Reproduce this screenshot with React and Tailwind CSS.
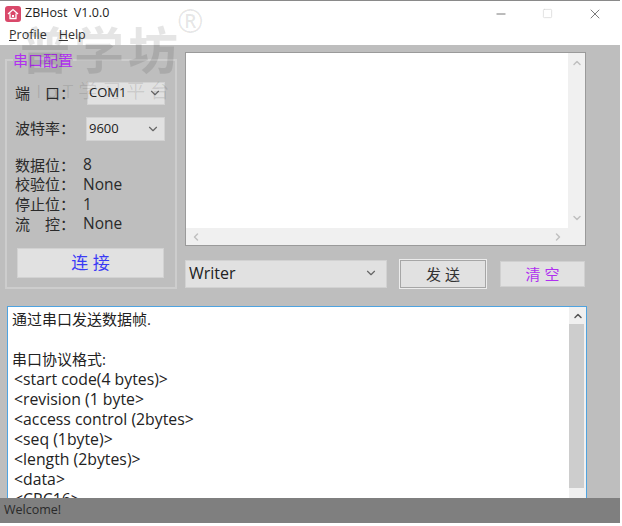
import React from "react";
import { ChevronDown, ChevronUp, ChevronLeft, ChevronRight, Minus, Square, X } from "lucide-react";

const FONT = "font-['Open_Sans','Noto_Sans_CJK_SC',sans-serif]";

const Combo = ({ label, className }) => (
  <div className={`flex items-center justify-between bg-[#e1e1e1] border border-[#d2d2d2] text-[#222] ${className}`}>
    <span>{label}</span>
    <ChevronDown className="w-3.5 h-3.5 text-[#666]" />
  </div>
);

const InfoRow = ({ label, value }) => (
  <div className="flex h-[19.7px] items-center text-[15px] text-[#2a2a2a]">
    <span className="w-[68px] whitespace-pre">{label}</span>
    <span className="text-[15.5px]">{value}</span>
  </div>
);

const PROTOCOL = [
  { text: "通过串口发送数据帧.", cjk: true },
  { text: "" },
  { text: "串口协议格式:", cjk: true },
  { text: "<start code(4 bytes)>" },
  { text: "<revision (1 byte>" },
  { text: "<access control (2bytes>" },
  { text: "<seq (1byte)>" },
  { text: "<length (2bytes)>" },
  { text: "<data>" },
  { text: "<CRC16>" },
];

export default function App() {
  return (
    <div className={`relative w-[622px] h-[526px] overflow-hidden bg-white ${FONT}`}>
      <div className="flex flex-col w-[620px] h-[523px] border-t border-[#8a8a8a] bg-[#bebebe]">
        {/* Title bar */}
        <div className="flex items-center h-[25px] shrink-0 bg-white pl-[5px]">
          <svg width="16" height="16" viewBox="0 0 16 16" className="shrink-0">
            <rect width="16" height="16" rx="3" fill="#d9486a" />
            <path d="M3 8l5-4.5L13 8M5 7.5V12.5H11V7.5" fill="none" stroke="#fff" strokeWidth="1.3" />
            <rect x="7" y="9" width="2" height="2" fill="#fff" />
          </svg>
          <span className="ml-1 text-[12.5px] text-[#222] whitespace-pre">ZBHost  V1.0.0</span>
          <div className="ml-auto flex items-center text-[#666]">
            <Minus className="w-[14px] h-[14px] mr-[34px]" strokeWidth={1.5} />
            <Square className="w-[11px] h-[11px] mr-[34px] text-[#d5d5d5]" strokeWidth={1.5} />
            <X className="w-[16px] h-[16px] mr-[17px]" strokeWidth={1.3} />
          </div>
        </div>

        {/* Menu */}
        <div className="flex items-center gap-[12px] h-[19px] shrink-0 bg-white pl-[9px] text-[12.5px] text-[#333]">
          <span><span className="underline">P</span>rofile</span>
          <span><span className="underline">H</span>elp</span>
        </div>

        {/* Body */}
        <div className="flex flex-1 min-h-0 flex-col">
          <div className="flex items-start">
            <fieldset className="w-[172px] h-[238px] ml-[5px] mt-[6px] border-2 border-[#cdcdcd] px-[8px]">
              <legend className="-ml-0.5 text-[15px] leading-[18px] text-[#b030f0]">串口配置</legend>
              <div className="flex items-center h-6 mt-[12px] text-[15px] text-[#2a2a2a]">
                <span className="w-[72px] whitespace-pre">端　口：</span>
                <Combo label="COM1" className="w-[78px] h-[23px] pl-[1px] pr-0.5 text-[13px]" />
              </div>
              <div className="flex items-center h-6 mt-[12px] text-[15px] text-[#2a2a2a]">
                <span className="w-[71px] pb-0.5">波特率：</span>
                <Combo label="9600" className="w-[79px] h-6 pl-[2px] pr-1 text-[13px]" />
              </div>
              <div className="mt-[14px]">
                <InfoRow label="数据位：" value="8" />
                <InfoRow label="校验位：" value="None" />
                <InfoRow label="停止位：" value="1" />
                <InfoRow label="流　控：" value="None" />
              </div>
              <div className="flex items-center justify-center w-[147px] h-[30px] mt-[14px] ml-0.5 bg-[#e1e1e1] border border-[#d2d2d2] text-[17px] text-[#3a3af5] whitespace-pre">
                连 接
              </div>
            </fieldset>

            <div className="ml-[8px] mt-[7px] w-[401px]">
              {/* Log box */}
              <div className="flex flex-col h-[194px] bg-white border border-[#9a9a9a]">
                <div className="flex flex-1 min-h-0">
                  <div className="flex-1" />
                  <div className="flex flex-col justify-between items-center w-[17px] py-1 bg-[#f0f0f0] text-[#c0c0c0]">
                    <ChevronUp className="w-3 h-3" strokeWidth={3} />
                    <ChevronDown className="w-3 h-3" strokeWidth={3} />
                  </div>
                </div>
                <div className="flex items-center justify-between h-[17px] shrink-0 px-1 bg-[#f0f0f0] text-[#c0c0c0]">
                  <ChevronLeft className="w-3 h-3" strokeWidth={3} />
                  <ChevronRight className="w-3 h-3 mr-[17px]" strokeWidth={3} />
                </div>
              </div>

              {/* Send row */}
              <div className="flex items-center mt-[14px]">
                <Combo label="Writer" className="w-[202px] h-[28px] pl-[3px] pr-2 pb-0.5 text-[16px]" />
                <div className="flex items-center justify-center w-[86px] h-[28px] ml-[13px] bg-[#e1e1e1] border border-[#a6a6a6] outline outline-[#ececec] text-[15px] text-[#333] whitespace-pre">
                  发 送
                </div>
                <div className="flex items-center justify-center w-[85px] h-[26px] ml-[14px] bg-[#e1e1e1] border border-[#d0d0d0] text-[15px] text-[#b030f0] whitespace-pre">
                  清 空
                </div>
              </div>
            </div>
          </div>

          {/* Protocol box */}
          <div className="flex flex-1 min-h-0 w-[580px] ml-[7px] mt-[17px] bg-white border border-b-0 border-[#4fa3e0] overflow-hidden">
            <div className="flex-1 pt-[2px] text-[#222]">
              {PROTOCOL.map((line, i) => (
                <div
                  key={i}
                  className={line.cjk ? "h-5 leading-5 pl-1 text-[15px] whitespace-pre" : "h-5 leading-5 pl-1.5 text-[15.8px] whitespace-pre"}
                >
                  {line.text}
                </div>
              ))}
            </div>
            <div className="flex flex-col w-[17px] bg-[#f0f0f0]">
              <div className="flex justify-center items-center h-[17px] shrink-0">
                <ChevronUp className="w-3 h-3 text-[#555]" strokeWidth={3} />
              </div>
              <div className="flex-1 bg-[#cdcdcd] mr-0.5" />
              <div className="h-[10px] shrink-0" />
            </div>
          </div>
        </div>

        {/* Status bar */}
        <div className="flex items-center h-[25px] shrink-0 bg-[#7f7f7f] pl-[4px] text-[12.5px] text-[#2a2a2a]">
          Welcome!
        </div>
      </div>

      {/* Watermark */}
      <div className="absolute left-[20px] top-[20px] text-[50px] leading-[60px] tracking-[4px] font-bold text-black/10 pointer-events-none whitespace-pre">普学坊</div>
      <div className="absolute left-[177px] top-[1px] text-[32px] leading-[40px] text-black/10 pointer-events-none">®</div>
      <div className="absolute left-[36px] top-[79px] text-[19px] leading-[24px] tracking-[5px] text-black/10 pointer-events-none whitespace-pre">IoT学习平台</div>
    </div>
  );
}
